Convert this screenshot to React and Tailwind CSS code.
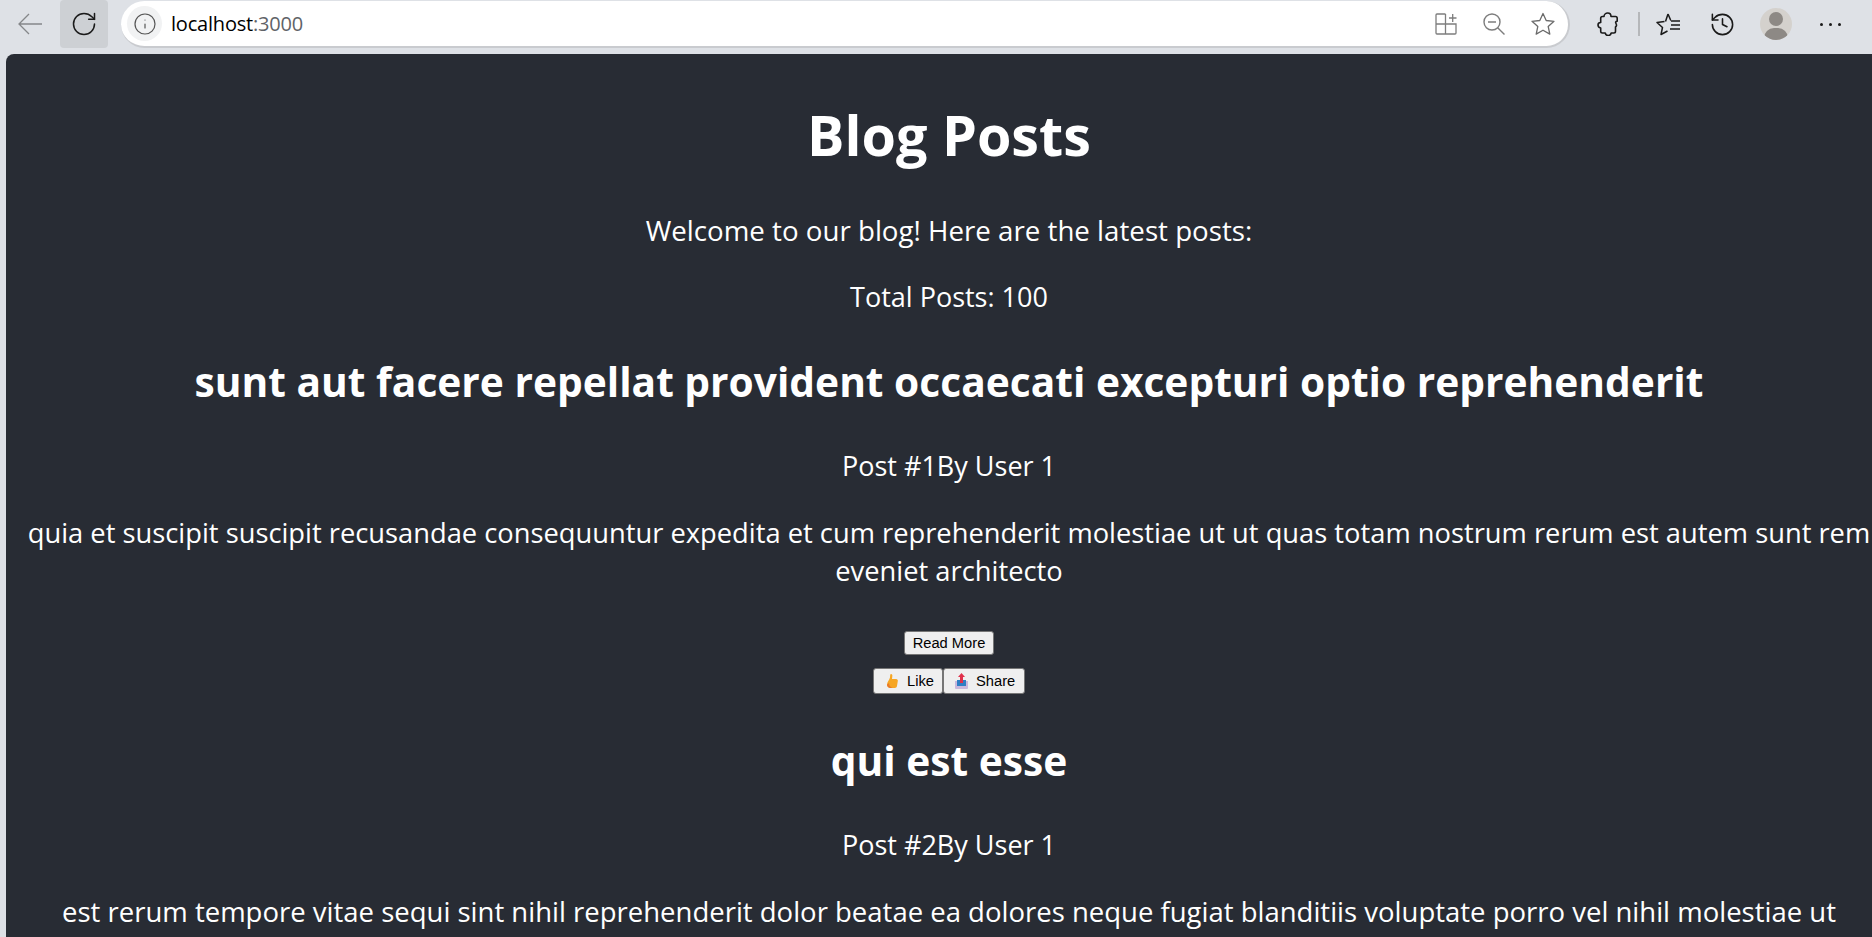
import React from 'react';
import { RotateCw, Info, History } from 'lucide-react';

const posts = [
  {
    id: 1,
    title: 'sunt aut facere repellat provident occaecati excepturi optio reprehenderit',
    body: 'quia et suscipit suscipit recusandae consequuntur expedita et cum reprehenderit molestiae ut ut quas totam nostrum rerum est autem sunt rem eveniet architecto',
    bodySize: 'text-[27.300px]',
  },
  {
    id: 2,
    title: 'qui est esse',
    body: 'est rerum tempore vitae sequi sint nihil reprehenderit dolor beatae ea dolores neque fugiat blanditiis voluptate porro vel nihil molestiae ut reiciendis qui aperiam non debitis possimus qui neque nisi nulla',
    bodySize: 'text-[27.500px]',
  },
];

const STAR = 'M12 1.500l3.200 7 7.800.8-5.800 5.200 1.600 7.600L12 18.200 5.200 22.100l1.600-7.600L1 9.300l7.800-.8z';

const ThumbIcon = () => (
  <svg width="14" height="16" viewBox="0 0 14 16" className="shrink-0">
    <path d="M6 1c1.200 0 1.500 1 1.300 2.200L7 6h4c1.500 0 2 1 1.800 2l-.8 5c-.2 1.300-1 2-2.300 2H5.500C3.500 15 2 13.500 2 11.500 2 9 4.500 7 5 4.500 5.200 3 5 1 6 1z" fill="#f6a623" />
    <path d="M2 11.500C2 13.500 3.500 15 5.500 15h2C5 14 4 12 4 10z" fill="#e8792b" />
  </svg>
);

const ShareIcon = () => (
  <svg width="13" height="16" viewBox="0 0 13 16" className="shrink-0">
    <path d="M0 8h13v7a1 1 0 0 1-1 1H1a1 1 0 0 1-1-1z" fill="#c9b8dc" />
    <rect x="2" y="7" width="9" height="6" fill="#2f7fc4" />
    <path d="M6.500 0 10 4H8v6H5V4H3z" fill="#e0314b" />
  </svg>
);

const BackIcon = () => (
  <svg width="24" height="22" viewBox="0 0 24 22" fill="none" stroke="#85878a" strokeWidth="1.300" className="shrink-0">
    <path d="M24 11H1M11 1 1 11l10 10" />
  </svg>
);

const TabsIcon = () => (
  <svg width="22" height="22" viewBox="0 0 22 22" fill="none" stroke="#7d7d7d" strokeWidth="1.300" className="shrink-0">
    <path d="M10.500 1H2a1 1 0 0 0-1 1v18a1 1 0 0 0 1 1h18a1 1 0 0 0 1-1V11H1M10.500 1v20" />
    <path d="M14 5h7.500M17.700 1v8" />
  </svg>
);

const ZoomIcon = () => (
  <svg width="22" height="22" viewBox="0 0 22 22" fill="none" stroke="#7d7d7d" strokeWidth="1.400" className="shrink-0">
    <circle cx="9" cy="9" r="8" />
    <path d="M14.700 14.700 21.500 21.500M5 9h8" />
  </svg>
);

const PuzzleIcon = () => (
  <svg width="22" height="24" viewBox="0 0 22 24" fill="none" stroke="#1a1a1a" strokeWidth="1.600" strokeLinejoin="round" className="shrink-0">
    <path d="M7 4.500C7 2.500 8.800 1 10.700 1s3.300 1.500 3.300 3.500h4.500c1 0 1.700.7 1.700 1.700v3.100c-1.800 0-1.800 1-1.200 2.200.6 1.200 1.200 2.500-.5 3.500v4.300c0 1-.7 1.700-1.700 1.700h-2.600c-.3 1.600-1.500 2.500-3 2.500s-2.700-.9-3-2.500H5.400c-1 0-1.700-.7-1.700-1.700v-3.300C1.800 15.500 1 14.300 1 13s.8-2.500 2.700-2.500V6.200c0-1 .7-1.700 1.700-1.700z" />
  </svg>
);

const FavoritesIcon = () => (
  <svg width="24" height="24" viewBox="0 0 24 24" fill="none" stroke="#1a1a1a" strokeWidth="1.500" strokeLinejoin="round" className="shrink-0">
    <path d="M12 2l2.600 6H15M8.500 9.500 1 10.500l5.500 5-1.500 7 6.500-3.500M12 2 9.500 9.500" />
    <path d="M15 9h9M15 13h9M14 17h10" />
  </svg>
);

const Avatar = () => (
  <div className="relative ml-[24px] h-[32px] w-[32px] shrink-0 overflow-hidden rounded-full bg-[#d4d1cd]">
    <div className="absolute left-[9px] top-[4px] h-[14px] w-[14px] rounded-full bg-[#8d8985]" />
    <div className="absolute left-[4px] top-[20px] h-[20px] w-[24px] rounded-full bg-[#8d8985]" />
  </div>
);

const BrowserBar = () => (
  <div className="flex h-[54px] shrink-0 items-center bg-[#dee1e6] pb-[6px]">
    <div className="ml-[18px]"><BackIcon /></div>
    <div className="ml-[18px] flex h-[48px] w-[48px] shrink-0 items-center justify-center rounded-[4px] bg-[#cdd0d4]">
      <RotateCw size={28} strokeWidth={1.300} color="#1a1a1a" />
    </div>
    <div className="ml-[13px] mt-[1px] flex h-[47px] w-[1449px] shrink-0 items-center rounded-full border-b-2 border-r-2 border-[#c9cbcf] bg-white">
      <div className="ml-[6px] flex h-[35px] w-[35px] items-center justify-center rounded-full bg-[#f1f2f3]">
        <Info size={24} strokeWidth={1.200} color="#555" />
      </div>
      <span className="ml-[9px] font-['Open_Sans',sans-serif] text-[20px] tracking-[-0.2px] text-black">
        localhost<span className="text-[#5f6368]">:3000</span>
      </span>
      <div className="ml-auto mr-[13px] flex items-center gap-[26px]">
        <TabsIcon />
        <ZoomIcon />
        <svg width="24" height="24" viewBox="0 0 24 24" fill="none" stroke="#6b6b6b" strokeWidth="1.300" strokeLinejoin="round" className="shrink-0">
          <path d={STAR} />
        </svg>
      </div>
    </div>
    <div className="ml-[27px]"><PuzzleIcon /></div>
    <div className="ml-[19px] h-[24px] w-[2px] shrink-0 bg-[#b5b7ba]" />
    <div className="ml-[16px]"><FavoritesIcon /></div>
    <History size={27} strokeWidth={1.400} color="#1a1a1a" className="ml-[29px] shrink-0" />
    <Avatar />
    <div className="ml-[28px] flex w-[21px] shrink-0 items-center justify-between">
      <span className="h-[3px] w-[3px] rounded-full bg-[#1a1a1a]" />
      <span className="h-[3px] w-[3px] rounded-full bg-[#1a1a1a]" />
      <span className="h-[3px] w-[3px] rounded-full bg-[#1a1a1a]" />
    </div>
  </div>
);

const Post = ({ post }) => (
  <article className="pb-[1px]">
    <h2 className="mb-[37px] mt-[37px] text-[40.700px] font-bold leading-[57px]">{post.title}</h2>
    <p className="mb-[29px] text-[27px] leading-[38px]">Post #{post.id}By User 1</p>
    <p className={`mb-[29px] leading-[38px] ${post.bodySize}`}>{post.body}</p>
    <div className="mt-[41px] flex justify-center">
      <button className="h-[24px] w-[90px] rounded-[3px] border border-[#767676] bg-[#efefef] font-['Liberation_Sans',sans-serif] text-[14.700px] leading-none text-black">
        Read More
      </button>
    </div>
    <div className="mt-[13px] flex justify-center">
      <button className="flex h-[26px] w-[70px] items-center gap-[8px] rounded-[3px] border border-[#767676] bg-[#efefef] pl-[11px] font-['Liberation_Sans',sans-serif] text-[14.700px] leading-none text-black">
        <ThumbIcon /> Like
      </button>
      <button className="flex h-[26px] w-[82px] items-center gap-[8px] rounded-[3px] border border-[#767676] bg-[#efefef] pl-[11px] font-['Liberation_Sans',sans-serif] text-[14.700px] leading-none text-black">
        <ShareIcon /> Share
      </button>
    </div>
  </article>
);

export default function App() {
  return (
    <div className="flex h-[937px] w-[1872px] flex-col overflow-hidden bg-[#dee1e6]">
      <BrowserBar />
      <main className="ml-[6px] min-h-0 flex-1 overflow-hidden rounded-tl-[8px] bg-[#282c34]">
        <div className="w-[1886px] px-[6px] text-center font-['Open_Sans',sans-serif] leading-[38px] text-white">
          <h1 className="mb-[40px] mt-[43px] text-[55.700px] font-bold leading-[74px]">Blog Posts</h1>
          <p className="mb-[29px] text-[27.700px] leading-[38px]">Welcome to our blog! Here are the latest posts:</p>
          <p className="text-[27px] leading-[38px]">Total Posts: 100</p>
          {posts.map(post => (
            <Post key={post.id} post={post} />
          ))}
        </div>
      </main>
    </div>
  );
}
